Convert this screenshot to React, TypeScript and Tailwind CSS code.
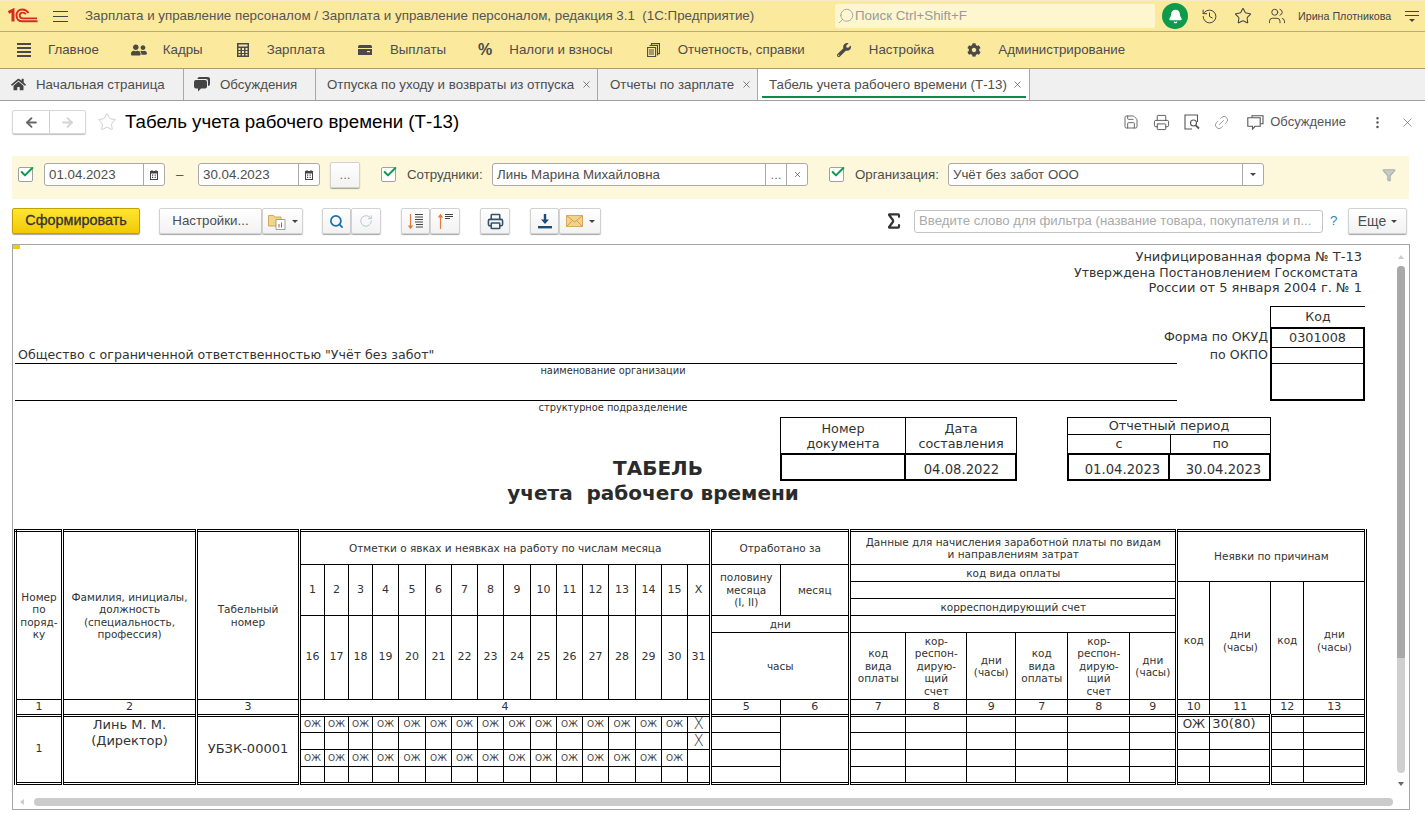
import React from 'react';
import { Bell, Check, History, Link2, Printer, Save, Search, Sigma, Star, Users, X, MoreVertical, ArrowLeft, ArrowRight, Filter, RotateCw } from 'lucide-react';
import { FaCog, FaHome, FaUserFriends, FaWrench } from 'react-icons/fa';

const UI_FONT = "font-['Liberation_Sans',Arial,sans-serif]";
const REPORT_FONT = "font-['DejaVu_Sans',Verdana,sans-serif]";

const Logo = () => (
  <svg viewBox="0 0 30 16" className="h-[16px] w-[30px]" fill="none" stroke="#d62b1f">
    <path d="M0.5 4.5 L5 2.2 V13.5" strokeWidth="3" />
    <path d="M20.5 5 C19 2.8 16.8 1.5 14.3 1.5 C10.6 1.5 8.5 4.2 8.5 7.6 C8.5 11 10.8 13.3 14.3 13.3 L29.5 13.3" strokeWidth="2" />
    <path d="M17.8 6.2 C17 5 15.8 4.6 14.6 4.6 C12.9 4.6 11.7 5.9 11.7 7.5 C11.7 9.1 12.9 10.3 14.6 10.3 L29 10.3" strokeWidth="1.8" />
  </svg>
);

const MenuLines = () => (
  <div className="flex w-[14px] flex-col gap-[2px]">
    <div className="h-[2px] bg-[#4a4a4a]" />
    <div className="h-[2px] bg-[#4a4a4a]" />
    <div className="h-[2px] bg-[#4a4a4a]" />
    <div className="h-[2px] bg-[#4a4a4a]" />
  </div>
);

const CalcIcon = () => (
  <svg viewBox="0 0 12 14" className="h-[14px] w-[12px]">
    <path
      fillRule="evenodd"
      fill="#4a4a4a"
      d="M0 0h12v14H0z M1.5 1.5v2h9v-2z M1.5 5v2h2V5z M5 5v2h2V5z M8.5 5v2h2V5z M1.5 8v2h2V8z M5 8v2h2V8z M8.5 8v2h2V8z M1.5 11v1.5h2V11z M5 11v1.5h2V11z M8.5 11v1.5h2V11z"
    />
  </svg>
);

const CardIcon = () => (
  <svg viewBox="0 0 14 10" className="h-[10px] w-[14px]">
    <path fill="#4a4a4a" d="M0 1.5 1 0h12l1 1.5V3H0z M0 4h14v6H0z" />
    <path fill="#fbe99d" d="M9 6h3v1.2H9z" />
  </svg>
);

const ReportsIcon = () => (
  <svg viewBox="0 0 13 14" className="h-[14px] w-[13px]" fill="none" stroke="#4a4a4a" strokeWidth="1.1">
    <path d="M4.5 2.5V.6h8v10h-2" />
    <path d="M2.5 2.5h8v10" />
    <path d="M.6 4.5h8v9h-8z" />
    <path d="M2 7h5M2 9h5M2 11h5" />
  </svg>
);

const CommentsIcon = () => (
  <svg viewBox="0 0 16 15" className="h-[15px] w-[16px]" fill="#444">
    <path d="M5 0h9a2 2 0 0 1 2 2v5a2 2 0 0 1-2 2V4a2 2 0 0 0-2-2H3.5A2 2 0 0 1 5 0z" />
    <path d="M2 3h9a2 2 0 0 1 2 2v4.5a2 2 0 0 1-2 2H7l-3 3v-3H2a2 2 0 0 1-2-2V5a2 2 0 0 1 2-2z" />
  </svg>
);

const PreviewIcon = () => (
  <svg viewBox="0 0 16 16" className="h-[16px] w-[16px]" fill="none" stroke="#555" strokeWidth="1.1">
    <path d="M8 15H1V1h12.5v7" />
    <circle cx="9.5" cy="9" r="3" />
    <path d="M11.8 11.3 15 14.5" strokeWidth="1.8" />
  </svg>
);

const DiscussIcon = () => (
  <svg viewBox="0 0 17 15" className="h-[15px] w-[17px]" fill="none" stroke="#555" strokeWidth="1.1">
    <path d="M5 2.5V.8h11v8h-2.5" />
    <path d="M.8 2.8h12.4v8.5H8l-2.5 2.8v-2.8H.8z" fill="white" />
  </svg>
);

const CalendarIcon = () => (
  <svg viewBox="0 0 10 10" className="h-[10px] w-[10px]">
    <path
      fillRule="evenodd"
      fill="#444"
      d="M1 1h1.5V0h1v1h3V0h1v1H9v9H1z M2 3.5V9h6V3.5z M3 4.5h1.2v1.2H3z M5.6 4.5h1.2v1.2H5.6z M3 6.8h1.2V8H3z M5.6 6.8h1.2V8H5.6z"
    />
  </svg>
);

const FolderReportIcon = () => (
  <svg viewBox="0 0 18 17" className="h-[17px] w-[18px]">
    <path fill="#f1d58a" stroke="#c49a45" strokeWidth="0.8" d="M.5 2.5h5l1.5 1.5h6v9H.5z" />
    <path fill="#fff" stroke="#8a8a8a" strokeWidth="0.8" d="M8 6.5h9v10H8z" />
    <path fill="#c0503c" d="M10.5 11h1v3.5h-1z M13 9.5h1v5h-1z" />
  </svg>
);

const SortIcon = ({ up }: { up?: boolean }) => (
  <svg viewBox="0 0 17 17" className="h-[17px] w-[17px]" fill="none">
    {up ? (
      <>
        <path d="M3.5 16V2" stroke="#e07b3c" strokeWidth="1.2" />
        <path d="M.8 4.5 3.5 .8l2.7 3.7z" fill="#e07b3c" />
        <path d="M8 1.5h8M8 3.5h8M8 5.5h5" stroke="#444" strokeWidth="1" />
      </>
    ) : (
      <>
        <path d="M3.5 1v14" stroke="#e07b3c" strokeWidth="1.2" />
        <path d="M.8 12.5 3.5 16.2l2.7-3.7z" fill="#e07b3c" />
        <path d="M8 1.5h8M8 4h8M8 6.5h8M8 9h8M9 11.5h7M9 14h7" stroke="#444" strokeWidth="1" />
      </>
    )}
  </svg>
);

const DownloadIcon = () => (
  <svg viewBox="0 0 16 15" className="h-[15px] w-[16px]" fill="#184d7a">
    <path d="M6.8 0h2.4v5.5H12L8 10 4 5.5h2.8z" />
    <path d="M1 12h14v2.4H1z" />
  </svg>
);

const MailIcon = () => (
  <svg viewBox="0 0 17 12" className="h-[12px] w-[17px]">
    <path fill="#f3d28a" stroke="#cf9a45" strokeWidth="0.8" d="M.5.5h16v11H.5z" />
    <path fill="none" stroke="#cf9a45" strokeWidth="0.9" d="M.5.5 8.5 7l8-6.5M.5 11.5l6-6M16.5 11.5l-6-6" />
  </svg>
);

const MenuItem = ({ icon, label, className }: { icon: React.ReactNode; label: string; className: string }) => (
  <div className={`flex items-center ${className}`}>
    {icon}
    <span className="whitespace-nowrap">{label}</span>
  </div>
);

const Tab = ({ icon, label, w, close, pl }: { icon?: React.ReactNode; label: string; w: string; close?: boolean; pl: string }) => (
  <div className={`flex h-full shrink-0 items-center border-r border-[#a8a8a8] ${w} ${pl}`}>
    {icon}
    <span className="whitespace-nowrap">{label}</span>
    {close && <X size={11} strokeWidth={1.6} className="ml-auto mr-[5px] text-[#555]" />}
  </div>
);

const Checkbox = ({ className = '' }: { className?: string }) => (
  <div className={`relative h-[15px] w-[15px] shrink-0 rounded-[2px] border border-[#a0a0a0] bg-white ${className}`}>
    <Check size={16} strokeWidth={3} className="absolute -top-[4px] left-0 text-[#0f9a4c]" />
  </div>
);

const Field = ({ children, className = '' }: { children: React.ReactNode; className?: string }) => (
  <div className={`flex h-[23px] shrink-0 items-center rounded-[3px] border border-[#a9a9a9] bg-white text-[#4d4d4d] ${className}`}>
    {children}
  </div>
);

const FieldBtn = ({ children, className = '' }: { children: React.ReactNode; className?: string }) => (
  <div className={`flex h-full shrink-0 items-center justify-center border-l border-[#a9a9a9] text-[#555] ${className}`}>{children}</div>
);

const BTN =
  'flex h-[26px] shrink-0 items-center justify-center rounded-[2px] border border-[#d2d2d2] bg-gradient-to-b from-white to-[#f2f2f2] shadow-[0_1px_1px_rgba(0,0,0,0.35)]';

const Caret = () => <div className="h-0 w-0 border-x-[3px] border-t-[3px] border-x-transparent border-t-[#444]" />;

const CELL = 'border border-double border-black p-0 text-center align-middle';

const Td = ({
  children,
  className = '',
  colSpan,
  rowSpan,
}: {
  children?: React.ReactNode;
  className?: string;
  colSpan?: number;
  rowSpan?: number;
}) => (
  <td colSpan={colSpan} rowSpan={rowSpan} className={`${CELL} ${className}`}>
    {children}
  </td>
);

const COLS = [
  'w-[47px]', 'w-[134px]', 'w-[103px]',
  'w-[25px]', 'w-[24px]', 'w-[24px]', 'w-[26px]', 'w-[27px]', 'w-[26px]', 'w-[26px]', 'w-[26px]',
  'w-[27px]', 'w-[26px]', 'w-[26px]', 'w-[26px]', 'w-[27px]', 'w-[26px]', 'w-[26px]', 'w-[23px]',
  'w-[70px]', 'w-[69px]', 'w-[56px]', 'w-[61px]', 'w-[49px]', 'w-[52px]', 'w-[62px]', 'w-[47px]',
  'w-[33px]', 'w-[61px]', 'w-[33px]', 'w-[62px]',
];

const TOP_DAYS = ['1', '2', '3', '4', '5', '6', '7', '8', '9', '10', '11', '12', '13', '14', '15', 'Х'];
const BOTTOM_DAYS = ['16', '17', '18', '19', '20', '21', '22', '23', '24', '25', '26', '27', '28', '29', '30', '31'];

const DBL_L = 'border-l-[3px]';

// строка данных: отметки по дням и пустые колонки справа
const DataRow = ({
  first,
  marks,
  last,
  six,
  code,
}: {
  first?: boolean;
  marks: boolean;
  last?: string;
  six?: boolean;
  code?: boolean;
}) => (
  <tr className="h-[17px]">
    {first && (
      <>
        <Td rowSpan={4} className={`${DBL_L} text-[11px]`}>1</Td>
        <Td rowSpan={4} className={`${DBL_L} align-top text-[13px] leading-[16px]`}>
          <div>Линь М. М.</div>
          <div>(Директор)</div>
        </Td>
        <Td rowSpan={4} className={`${DBL_L} text-[13px]`}>УБЗК-00001</Td>
      </>
    )}
    {TOP_DAYS.map((_, i) => (
      <Td key={i} className={`${i === 0 ? DBL_L : ''} ${i === 15 ? 'text-[15px] font-light' : 'text-[9px] text-[#444]'}`}>
        {i === 15 ? last : marks ? 'ОЖ' : ''}
      </Td>
    ))}
    <Td className={DBL_L} />
    {six && <Td rowSpan={2} />}
    <Td className={DBL_L} />
    <Td />
    <Td />
    <Td />
    <Td />
    <Td />
    <Td className={`${DBL_L} text-[12px]`}>{code ? 'ОЖ' : ''}</Td>
    <Td className="border-r-[3px] text-left text-[13px]">{code ? <span className="pl-[2px]">30(80)</span> : ''}</Td>
    <Td />
    <Td className="border-r-[3px]" />
  </tr>
);

const TimeTable = () => (
  <table className={`w-[1351px] table-fixed border-collapse border-[3px] border-double border-black text-[10.5px] leading-[12.5px] text-[#333] ${REPORT_FONT}`}>
    <colgroup>
      {COLS.map((c, i) => (
        <col key={i} className={c} />
      ))}
    </colgroup>
    <tbody>
      <tr className="h-[34px]">
        <Td rowSpan={6}>Номер<br />по<br />поряд-<br />ку</Td>
        <Td rowSpan={6} className={DBL_L}>Фамилия, инициалы,<br />должность<br />(специальность,<br />профессия)</Td>
        <Td rowSpan={6} className={DBL_L}>Табельный<br />номер</Td>
        <Td colSpan={16} className={DBL_L}>Отметки о явках и неявках на работу по числам месяца</Td>
        <Td colSpan={2} className={DBL_L}>Отработано за</Td>
        <Td colSpan={6} className={DBL_L}>Данные для начисления заработной платы по видам<br />и направлениям затрат</Td>
        <Td colSpan={4} rowSpan={2} className={`${DBL_L} border-r-[3px]`}>Неявки по причинам</Td>
      </tr>
      <tr className="h-[17px]">
        {TOP_DAYS.map((d, i) => (
          <Td key={d} rowSpan={3} className={`${i === 0 ? DBL_L : ''} text-[11px]`}>{d}</Td>
        ))}
        <Td rowSpan={3} className={DBL_L}>половину<br />месяца<br />(I, II)</Td>
        <Td rowSpan={3}>месяц</Td>
        <Td colSpan={6} className={DBL_L}>код вида оплаты</Td>
      </tr>
      <tr className="h-[17px]">
        <Td colSpan={6} className={DBL_L} />
        <Td rowSpan={4} className={DBL_L}>код</Td>
        <Td rowSpan={4}>дни<br />(часы)</Td>
        <Td rowSpan={4}>код</Td>
        <Td rowSpan={4} className="border-r-[3px]">дни<br />(часы)</Td>
      </tr>
      <tr className="h-[17px]">
        <Td colSpan={6} className={DBL_L}>корреспондирующий счет</Td>
      </tr>
      <tr className="h-[17px]">
        {BOTTOM_DAYS.map((d, i) => (
          <Td key={d} rowSpan={2} className={`${i === 0 ? DBL_L : ''} text-[11px]`}>{d}</Td>
        ))}
        <Td colSpan={2} className={DBL_L}>дни</Td>
        <Td colSpan={6} className={DBL_L} />
      </tr>
      <tr className="h-[67px]">
        <Td colSpan={2} className={DBL_L}>часы</Td>
        <Td className={DBL_L}>код<br />вида<br />оплаты</Td>
        <Td>кор-<br />респон-<br />дирую-<br />щий<br />счет</Td>
        <Td>дни<br />(часы)</Td>
        <Td>код<br />вида<br />оплаты</Td>
        <Td>кор-<br />респон-<br />дирую-<br />щий<br />счет</Td>
        <Td>дни<br />(часы)</Td>
      </tr>
      <tr className="h-[16px] border-b-[3px] border-double border-black text-[11px]">
        <Td>1</Td>
        <Td className={DBL_L}>2</Td>
        <Td className={DBL_L}>3</Td>
        <Td colSpan={16} className={DBL_L}>4</Td>
        <Td className={DBL_L}>5</Td>
        <Td>6</Td>
        <Td className={DBL_L}>7</Td>
        <Td>8</Td>
        <Td>9</Td>
        <Td>7</Td>
        <Td>8</Td>
        <Td>9</Td>
        <Td className={DBL_L}>10</Td>
        <Td>11</Td>
        <Td>12</Td>
        <Td className="border-r-[3px]">13</Td>
      </tr>
      <DataRow first marks last="Х" six code />
      <DataRow marks={false} last="Х" />
      <DataRow marks six />
      <DataRow marks={false} />
    </tbody>
  </table>
);

const ReportHead = () => (
  <div className={`w-[1350px] text-[12.6px] text-[#333] ${REPORT_FONT}`}>
    <div className="flex h-[57px] flex-col items-end pr-[3px] pt-[4px] text-[13px] leading-[15.5px]">
      <div>Унифицированная форма № Т-13</div>
      <div className="pr-[4px] text-[12.5px]">Утверждена Постановлением Госкомстата</div>
      <div>России от 5 января 2004 г. № 1</div>
    </div>
    <div className="mt-[4px] flex h-[111px]">
      <div className="w-[1162px] shrink-0">
        <div className="flex h-[58px] items-end border-b border-black pl-[3px] leading-[17px]">
          Общество с ограниченной ответственностью "Учёт без забот"
        </div>
        <div className="h-[37px] border-b border-black pl-[34px] pt-[1px] text-center text-[9.8px] leading-[12px]">наименование организации</div>
        <div className="pl-[34px] pt-[1px] text-center text-[9.8px] leading-[12px]">структурное подразделение</div>
      </div>
      <div className="flex w-[93px] shrink-0 flex-col items-end whitespace-nowrap pr-[2px]">
        <div className="h-[21px]" />
        <div className="flex h-[20px] items-center">Форма по ОКУД</div>
        <div className="flex h-[16px] items-center">по ОКПО</div>
      </div>
      <div className="w-[95px] shrink-0">
        <div className="flex h-[21px] items-center justify-center border-l border-t border-black">Код</div>
        <div className="h-[74px] border-2 border-black">
          <div className="flex h-[19px] items-center justify-center border-b border-black text-[12.8px]">0301008</div>
          <div className="h-[16px] border-b border-black" />
        </div>
      </div>
    </div>
    <div className="flex h-[64px] pl-[765px] text-[12.8px]">
      <div className="w-[237px] shrink-0">
        <div className="flex h-[36px] border border-b-0 border-black text-center leading-[15px]">
          <div className="flex w-[125px] items-center justify-center border-r border-black">Номер<br />документа</div>
          <div className="flex flex-1 items-center justify-center">Дата<br />составления</div>
        </div>
        <div className="flex h-[28px] border-2 border-black text-[13.2px]">
          <div className="w-[124px] border-r-2 border-black" />
          <div className="flex flex-1 items-end justify-center pl-[2px] leading-[18px]">04.08.2022</div>
        </div>
      </div>
      <div className="ml-[50px] w-[204px] shrink-0">
        <div className="flex h-[17px] items-center justify-center border border-b-0 border-black">Отчетный период</div>
        <div className="flex h-[19px] border border-b-0 border-black">
          <div className="flex w-[103px] items-center justify-center border-r border-black">с</div>
          <div className="flex flex-1 items-center justify-center">по</div>
        </div>
        <div className="flex h-[28px] border-2 border-black text-[13.2px]">
          <div className="flex w-[101px] items-end justify-center border-r-2 border-black pl-[8px] leading-[18px]">01.04.2023</div>
          <div className="flex flex-1 items-end justify-center pl-[8px] leading-[18px]">30.04.2023</div>
        </div>
      </div>
    </div>
    <div className="-mt-[25px] w-[1280px] text-center text-[20px] font-bold leading-[25px] text-[#2b2b2b]">
      <div className="pl-[6px]">ТАБЕЛЬ</div>
      <div className="whitespace-pre pr-[4px]">учета  рабочего времени</div>
    </div>
  </div>
);

export default function App() {
  return (
    <div className={`flex h-[814px] w-[1425px] flex-col overflow-hidden bg-white text-[#4d4d4d] ${UI_FONT}`}>
      {/* заголовок */}
      <div className="flex h-[32px] shrink-0 items-center border-b border-t border-[#b8ac78] border-t-[#f3eccb] bg-[#fbe99d] pl-[8px] text-[13.35px]">
        <Logo />
        <div className="ml-[15px] flex w-[15px] flex-col gap-[4px]">
          <div className="h-px bg-[#444]" />
          <div className="h-px bg-[#444]" />
          <div className="h-px bg-[#444]" />
        </div>
        <div className="ml-[17px] w-[750px] whitespace-pre text-[#555]">Зарплата и управление персоналом / Зарплата и управление персоналом, редакция 3.1  (1С:Предприятие)</div>
        <div className="flex h-[24px] w-[320px] items-center rounded-[2px] bg-[#fdf6cf] pl-[2px] text-[#9a9a9a]">
          <Search size={18} strokeWidth={1.1} className="-scale-x-100" />
          Поиск Ctrl+Shift+F
        </div>
        <div className="ml-[7px] flex h-[26px] w-[26px] items-center justify-center rounded-full bg-[#0f9a4c]">
          <Bell size={15} className="fill-white text-white" />
        </div>
        <History size={17} strokeWidth={1.4} className="ml-[13px] text-[#444]" />
        <Star size={18} strokeWidth={1.4} className="ml-[16px] text-[#444]" />
        <Users size={18} strokeWidth={1.3} className="ml-[16px] text-[#444]" />
        <span className="ml-[12px] whitespace-nowrap text-[10.7px] text-[#444]">Ирина Плотникова</span>
        <div className="ml-[14px] flex w-[14px] flex-col items-center gap-[3px]">
          <div className="h-px w-full bg-[#444]" />
          <div className="h-px w-full bg-[#444]" />
          <div className="h-0 w-0 border-x-[3px] border-t-[3px] border-x-transparent border-t-[#444]" />
        </div>
      </div>

      {/* разделы */}
      <div className="flex h-[37px] shrink-0 items-center border-b border-[#a89e70] bg-[#fbe99d] pl-[17px] text-[13.3px]">
        <MenuItem icon={<MenuLines />} label="Главное" className="gap-[17px]" />
        <MenuItem icon={<FaUserFriends size={16} className="text-[#4a4a4a]" />} label="Кадры" className="ml-[32px] gap-[16px]" />
        <MenuItem icon={<CalcIcon />} label="Зарплата" className="ml-[34px] gap-[18px]" />
        <MenuItem icon={<CardIcon />} label="Выплаты" className="ml-[33px] gap-[18px]" />
        <MenuItem icon={<span className="text-[16px] font-bold leading-none text-[#4a4a4a]">%</span>} label="Налоги и взносы" className="ml-[32px] gap-[17px]" />
        <MenuItem icon={<ReportsIcon />} label="Отчетность, справки" className="ml-[34px] gap-[18px]" />
        <MenuItem icon={<FaWrench size={14} className="text-[#4a4a4a]" />} label="Настройка" className="ml-[32px] gap-[18px]" />
        <MenuItem icon={<FaCog size={14} className="text-[#4a4a4a]" />} label="Администрирование" className="ml-[33px] gap-[17px]" />
      </div>

      {/* вкладки */}
      <div className="flex h-[32px] shrink-0 border-b border-[#a0a0a0] bg-[#f0f0f0] text-[13.3px]">
        <Tab icon={<FaHome size={15} className="mr-[10px] text-[#444]" />} label="Начальная страница" w="w-[184px]" pl="pl-[11px]" />
        <Tab icon={<span className="mr-[10px]"><CommentsIcon /></span>} label="Обсуждения" w="w-[132px]" pl="pl-[10px]" />
        <Tab label="Отпуска по уходу и возвраты из отпуска" w="w-[282px]" pl="pl-[11px]" close />
        <Tab label="Отчеты по зарплате" w="w-[160px]" pl="pl-[12px]" close />
        <div className="flex h-full w-[272px] shrink-0 items-center border-r border-[#a8a8a8] bg-white pl-[4px]">
          <div className="relative flex h-full w-[264px] items-center pl-[7px]">
            <span className="whitespace-nowrap">Табель учета рабочего времени (Т-13)</span>
            <X size={11} strokeWidth={1.6} className="ml-auto mr-[3px] text-[#555]" />
            <div className="absolute bottom-[2px] left-0 right-0 h-[2px] bg-[#0e8a4f]" />
          </div>
        </div>
      </div>

      {/* шапка формы */}
      <div className="mt-[9px] flex h-[24px] shrink-0 items-center pl-[12px]">
        <div className="flex h-[24px] w-[74px] rounded-[2px] border border-[#d8d8d8] shadow-[0_1px_1px_rgba(0,0,0,0.25)]">
          <div className="flex w-[37px] items-center justify-center border-r border-[#d0d0d0]">
            <ArrowLeft size={15} strokeWidth={3} className="text-[#666]" />
          </div>
          <div className="flex flex-1 items-center justify-center">
            <ArrowRight size={15} strokeWidth={3} className="text-[#d4d4d4]" />
          </div>
        </div>
        <Star size={20} strokeWidth={1} className="ml-[11px] text-[#c4c4c4]" />
        <div className="ml-[8px] text-[18.7px] text-black">Табель учета рабочего времени (Т-13)</div>
        <div className="ml-auto flex items-center pr-[10px] text-[#555]">
          <Save size={16} strokeWidth={1.3} />
          <Printer size={17} strokeWidth={1.3} className="ml-[14px]" />
          <span className="ml-[14px]"><PreviewIcon /></span>
          <Link2 size={17} strokeWidth={1.1} className="ml-[13px] -rotate-45 text-[#888]" />
          <span className="ml-[17px]"><DiscussIcon /></span>
          <span className="ml-[6px] text-[13px]">Обсуждение</span>
          <MoreVertical size={15} strokeWidth={2} className="ml-[24px]" />
          <X size={15} strokeWidth={1} className="ml-[15px]" />
        </div>
      </div>

      {/* отбор */}
      <div className="ml-[12px] mt-[22px] flex h-[43px] w-[1397px] shrink-0 items-center bg-[#fdf8dc] pb-[6px] pl-[6px] text-[13.3px]">
        <Checkbox />
        <Field className="ml-[11px] w-[121px]">
          <span className="flex-1 pl-[4px]">01.04.2023</span>
          <FieldBtn className="w-[21px]"><CalendarIcon /></FieldBtn>
        </Field>
        <span className="ml-[11px] w-[22px]">–</span>
        <Field className="w-[122px]">
          <span className="flex-1 pl-[4px]">30.04.2023</span>
          <FieldBtn className="w-[21px]"><CalendarIcon /></FieldBtn>
        </Field>
        <div className={`${BTN} ml-[10px] w-[30px] text-[#777]`}>...</div>
        <Checkbox className="ml-[21px]" />
        <span className="ml-[11px] w-[85px]">Сотрудники:</span>
        <Field className="w-[316px]">
          <span className="flex-1 pl-[4px]">Линь Марина Михайловна</span>
          <FieldBtn className="w-[21px] text-[#777]">...</FieldBtn>
          <FieldBtn className="w-[21px]"><X size={9} strokeWidth={2} /></FieldBtn>
        </Field>
        <Checkbox className="ml-[21px]" />
        <span className="ml-[11px] w-[93px]">Организация:</span>
        <Field className="w-[316px]">
          <span className="flex-1 pl-[4px]">Учёт без забот ООО</span>
          <FieldBtn className="w-[21px]"><Caret /></FieldBtn>
        </Field>
        <Filter size={14} className="ml-[118px] fill-[#c8ccc8] text-[#aab0aa]" />
      </div>

      {/* команды */}
      <div className="ml-[12px] mt-[9px] flex h-[26px] shrink-0 items-center text-[13.3px]">
        <div className="flex h-[26px] w-[128px] items-center justify-center rounded-[2px] border border-[#c2a200] bg-gradient-to-b from-[#ffe52e] to-[#f2c900] text-[14.4px] text-[#333] shadow-[0_1px_1px_rgba(0,0,0,0.35)] [-webkit-text-stroke:0.3px_#333]">
          Сформировать
        </div>
        <div className="ml-[19px] flex">
          <div className={`${BTN} w-[103px]`}>Настройки...</div>
          <div className={`${BTN} w-[41px] gap-[6px]`}>
            <FolderReportIcon />
            <Caret />
          </div>
        </div>
        <div className="ml-[19px] flex">
          <div className={`${BTN} w-[29px]`}><Search size={15} strokeWidth={2.8} className="text-[#1f6fa8]" /></div>
          <div className={`${BTN} w-[30px]`}><RotateCw size={14} strokeWidth={1.5} className="text-[#a8c4c8]" /></div>
        </div>
        <div className="ml-[20px] flex">
          <div className={`${BTN} w-[29px]`}><SortIcon /></div>
          <div className={`${BTN} w-[30px]`}><SortIcon up /></div>
        </div>
        <div className={`${BTN} ml-[20px] w-[30px]`}><Printer size={17} strokeWidth={2.2} className="text-[#33536b]" /></div>
        <div className="ml-[20px] flex">
          <div className={`${BTN} w-[29px]`}><DownloadIcon /></div>
          <div className={`${BTN} w-[42px] gap-[6px]`}>
            <MailIcon />
            <Caret />
          </div>
        </div>
        <Sigma size={20} strokeWidth={2.6} className="ml-[283px] text-[#333]" />
        <div className="ml-[10px] flex h-[23px] w-[409px] items-center rounded-[3px] border border-[#c4c4c4] bg-white pl-[4px] text-[13.2px] text-[#aaa]">
          Введите слово для фильтра (название товара, покупателя и п...
        </div>
        <span className="ml-[7px] w-[18px] text-[#2c7fb8]">?</span>
        <div className={`${BTN} w-[59px] gap-[5px] text-[14px]`}>Еще <Caret /></div>
      </div>

      {/* отчет */}
      <div className="relative ml-[12px] mt-[10px] flex h-[566px] w-[1398px] shrink-0 flex-col border border-[#a6a6a6]">
        <div className="absolute left-0 top-0 h-[4px] w-[7px] bg-[#f2c81e]" />
        <div className="flex min-h-0 flex-1">
          <div className="flex-1 overflow-hidden pl-[2px]">
            <ReportHead />
            <div className="-ml-[1px] mt-[23px]">
              <TimeTable />
            </div>
          </div>
          <div className="flex w-[14px] shrink-0 flex-col items-center pr-[2px] text-[#666]">
            <div className="mt-[10px] h-0 w-0 border-x-[3px] border-b-[4px] border-x-transparent border-b-[#ccc]" />
            <div className="mt-[7px] flex h-[507px] w-[8px] flex-col overflow-hidden rounded-[4px] bg-[#cfcfcf]">
              <div className="h-[392px] bg-[#a9a9a9]" />
            </div>
            <div className="mt-[9px] h-0 w-0 border-x-[3px] border-t-[4px] border-x-transparent border-t-[#666]" />
          </div>
        </div>
        <div className="flex h-[14px] shrink-0 items-start pl-[7px]">
          <div className="mt-[4px] h-0 w-0 border-y-[3px] border-r-[4px] border-y-transparent border-r-[#ccc]" />
          <div className="ml-[10px] mt-[3px] h-[8px] w-[1359px] rounded-[4px] bg-[#cbcbcb]" />
        </div>
      </div>
    </div>
  );
}
